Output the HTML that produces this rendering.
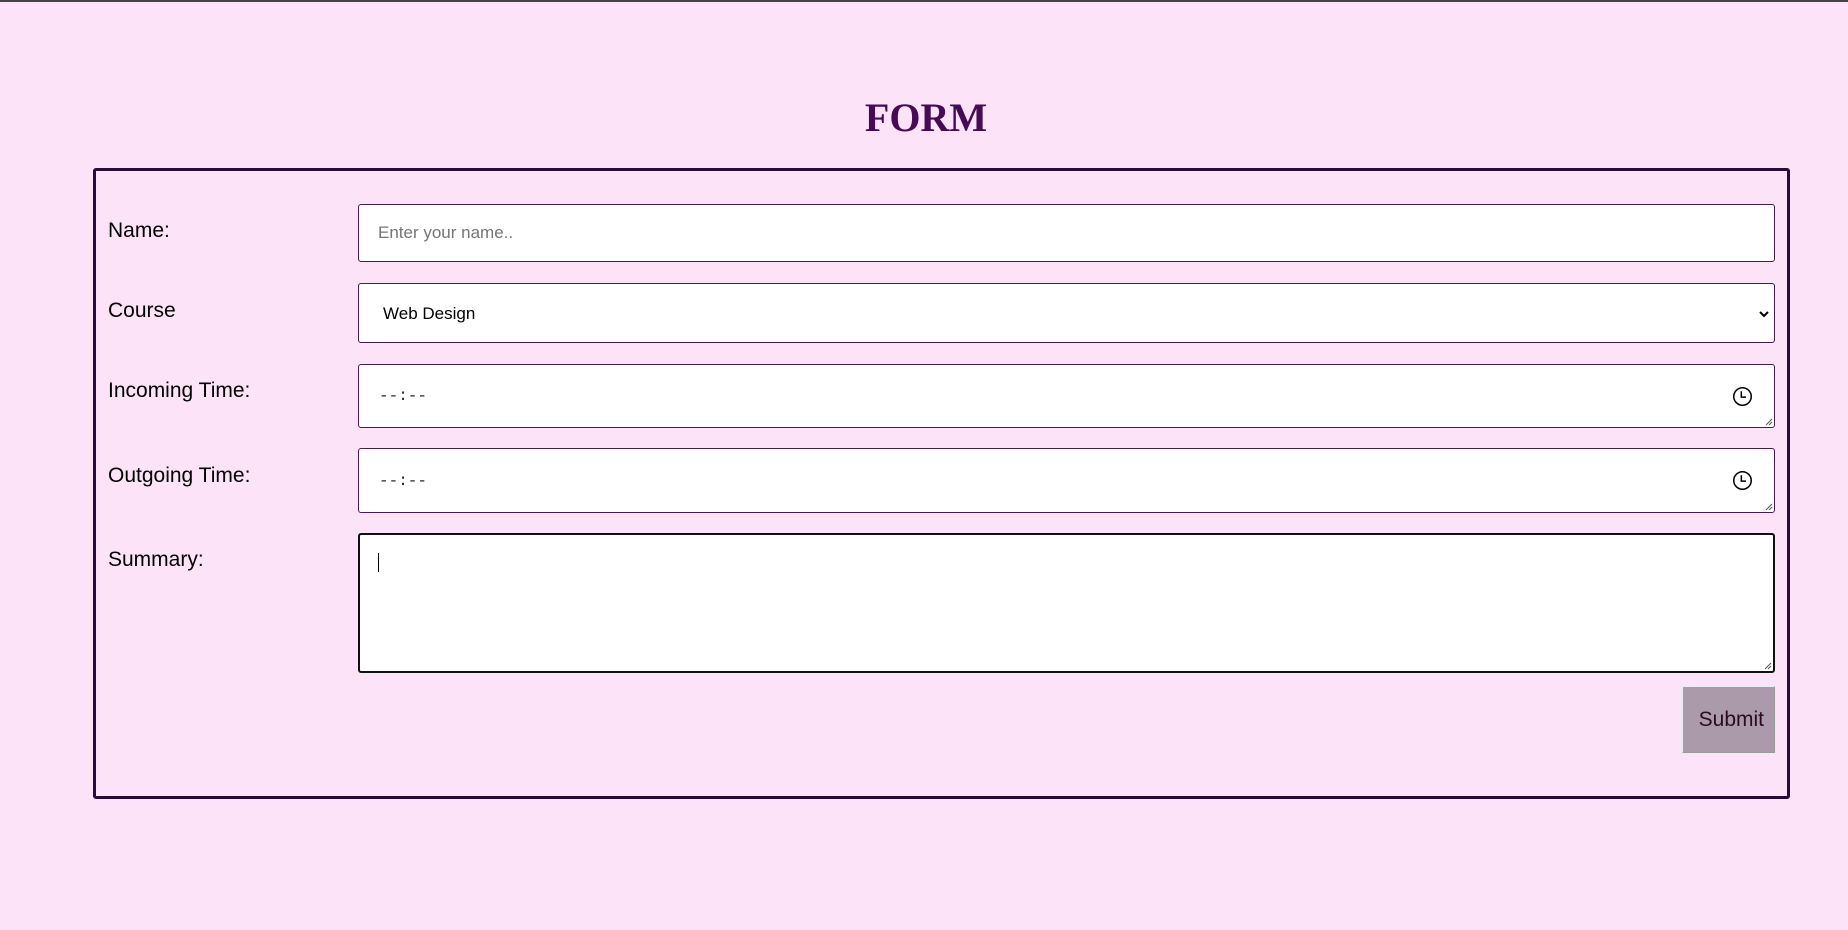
<!DOCTYPE html>
<html><head><meta charset="utf-8"><style>
html,body{margin:0;padding:0}
body{width:1848px;height:930px;background:#fce3f8;position:relative;overflow:hidden;font-family:"Liberation Sans",sans-serif;border-top:2px solid #444;box-sizing:border-box}
h1{position:absolute;left:0;width:1852px;text-align:center;top:92px;margin:0;font:bold 40px/48px "Liberation Serif",serif;color:#460a57}
.box{position:absolute;left:93px;top:166px;width:1691px;height:625px;border:3px solid #2a0a3a;border-radius:3px}
.lbl{position:absolute;left:108px;font-size:21px;color:#000;line-height:24px}
.f{position:absolute;left:358px;width:1417px;background:#fff;border:1px solid #4a1a50;border-radius:3px;box-sizing:border-box}
.ph{position:absolute;left:19px;font-size:17px;color:#757575}
.tm{position:absolute;left:20px;font:16px "Liberation Mono",monospace;color:#222}
.clk{position:absolute;right:21px;width:21px;height:21px}
.grip{position:absolute;right:1px;bottom:1px;width:8px;height:8px}
</style></head><body>
<h1>FORM</h1>
<div class="box"></div>
<div class="lbl" style="top:217px">Name:</div>
<div class="lbl" style="top:297px">Course</div>
<div class="lbl" style="top:377px">Incoming Time:</div>
<div class="lbl" style="top:462px">Outgoing Time:</div>
<div class="lbl" style="top:546px">Summary:</div>

<div class="f" style="top:202px;height:58px"><span class="ph" style="top:18px">Enter your name..</span></div>
<div class="f" style="top:281px;height:60px"><span style="position:absolute;left:24px;top:20px;font-size:17px;color:#000">Web Design</span>
<svg style="position:absolute;right:4px;top:25px" width="12" height="10" viewBox="0 0 12 10"><path d="M2 3l4 4 4-4" fill="none" stroke="#000" stroke-width="2"/></svg></div>
<div class="f" style="top:362px;height:64px"><span class="tm" style="top:22px">--:--</span>
<svg class="clk" style="top:21px" viewBox="0 0 18 18"><circle cx="9" cy="9" r="7.5" fill="none" stroke="#000" stroke-width="1.3"/><path d="M8 4.5v5h4" fill="none" stroke="#000" stroke-width="1.3"/></svg>
<svg class="grip" viewBox="0 0 8 8"><path d="M1 7L7 1M4 7L7 4" stroke="#555" stroke-width="1"/></svg></div>
<div class="f" style="top:446px;height:65px"><span class="tm" style="top:23px">--:--</span>
<svg class="clk" style="top:21px" viewBox="0 0 18 18"><circle cx="9" cy="9" r="7.5" fill="none" stroke="#000" stroke-width="1.3"/><path d="M8 4.5v5h4" fill="none" stroke="#000" stroke-width="1.3"/></svg>
<svg class="grip" viewBox="0 0 8 8"><path d="M1 7L7 1M4 7L7 4" stroke="#555" stroke-width="1"/></svg></div>
<div class="f" style="top:531px;height:140px;border:2px solid #111"><span style="position:absolute;left:18px;top:18px;width:1px;height:19px;background:#000"></span>
<svg class="grip" viewBox="0 0 8 8"><path d="M1 7L7 1M4 7L7 4" stroke="#555" stroke-width="1"/></svg></div>
<div style="position:absolute;left:1682px;top:684px;width:93px;height:67px;background:#ab9aa9;border:1px solid #e8eef5;border-right-color:#999;border-bottom-color:#999;box-sizing:border-box;color:#2a0a1f;font-size:21px;line-height:65px;text-align:right;padding-right:10px">Submit</div>
</body></html>
